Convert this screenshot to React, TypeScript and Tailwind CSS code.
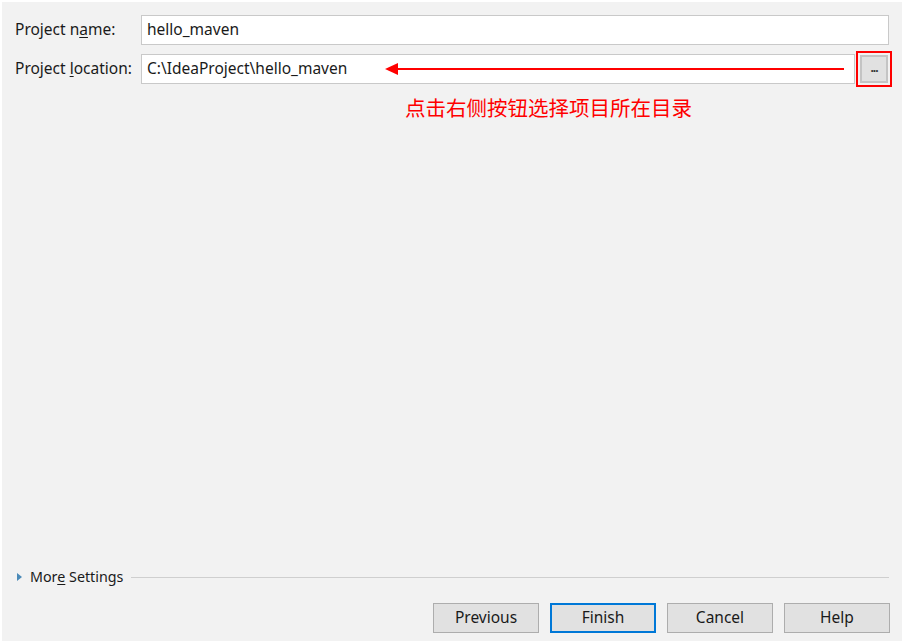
export default function App() {
  const font = { fontFamily: '"Noto Sans", "Noto Sans CJK SC", sans-serif' };
  return (
    <div
      className="w-[902px] h-[641px] bg-[#f2f2f2] border-l-2 border-t-2 border-white flex flex-col text-[15.5px] text-[#1a1a1a]"
      style={font}
    >
      <div className="flex flex-col pt-[13px] pl-[13px] pr-[13px] gap-[9px]">
        <div className="flex items-center h-[30px]">
          <div className="w-[126px] shrink-0">
            Project n<span className="underline underline-offset-2">a</span>me:
          </div>
          <div className="flex-1 h-[30px] bg-white border border-[#c9c9c9] flex items-center px-[5px]">
            hello_maven
          </div>
        </div>
        <div className="flex items-center h-[30px]">
          <div className="w-[126px] shrink-0">
            Project <span className="underline underline-offset-2">l</span>ocation:
          </div>
          <div className="flex-1 h-[30px] bg-white border border-[#c9c9c9] flex items-center px-[5px] relative">
            C:\IdeaProject\hello_maven
            <div className="absolute left-[243px] right-[10px] top-1/2 -translate-y-1/2 flex items-center">
              <div className="w-0 h-0 border-y-[6px] border-y-transparent border-r-[13px] border-r-[#ff0000]" />
              <div className="flex-1 h-[2px] bg-[#ff0000]" />
            </div>
          </div>
          <div className="ml-[1px] -mr-[3px] w-[36px] h-[36px] border-2 border-[#ff0000] flex items-center justify-center">
            <div className="w-[28px] h-[28px] bg-[#e1e1e1] border-2 border-[#c4c4c4] flex items-center justify-center text-[#333] text-[12px] leading-none pb-[2px] font-bold tracking-[-1px]">
              ...
            </div>
          </div>
        </div>
        <div className="pl-[390px] pt-[3px] text-[#ff0000] text-[20.5px] leading-[24px]">
          点击右侧按钮选择项目所在目录
        </div>
      </div>
      <div className="flex-1" />
      <div className="flex items-center pl-[14px] pr-[13px] h-[20px] text-[14.3px]">
        <svg width="6" height="8" viewBox="0 0 6 8" className="ml-[1px]">
          <path d="M0 0 L5 4 L0 8 Z" fill="#4a8ab8" />
        </svg>
        <span className="ml-[7px]">
          Mor<span className="underline underline-offset-2">e</span> Settings
        </span>
        <div className="flex-1 h-px bg-[#cfcfcf] ml-[8px]" />
      </div>
      <div className="flex justify-end gap-[11px] pr-[12px] pt-[16px] pb-[8px]">
        {["Previous", "Finish", "Cancel", "Help"].map((b) => (
          <div
            key={b}
            className={
              (b === "Finish" ? "border-2 border-[#0078d7] " : "border border-[#adadad] ") +
              "w-[106px] h-[30px] bg-[#e1e1e1] flex items-center justify-center"
            }
          >
            {b}
          </div>
        ))}
      </div>
    </div>
  );
}
